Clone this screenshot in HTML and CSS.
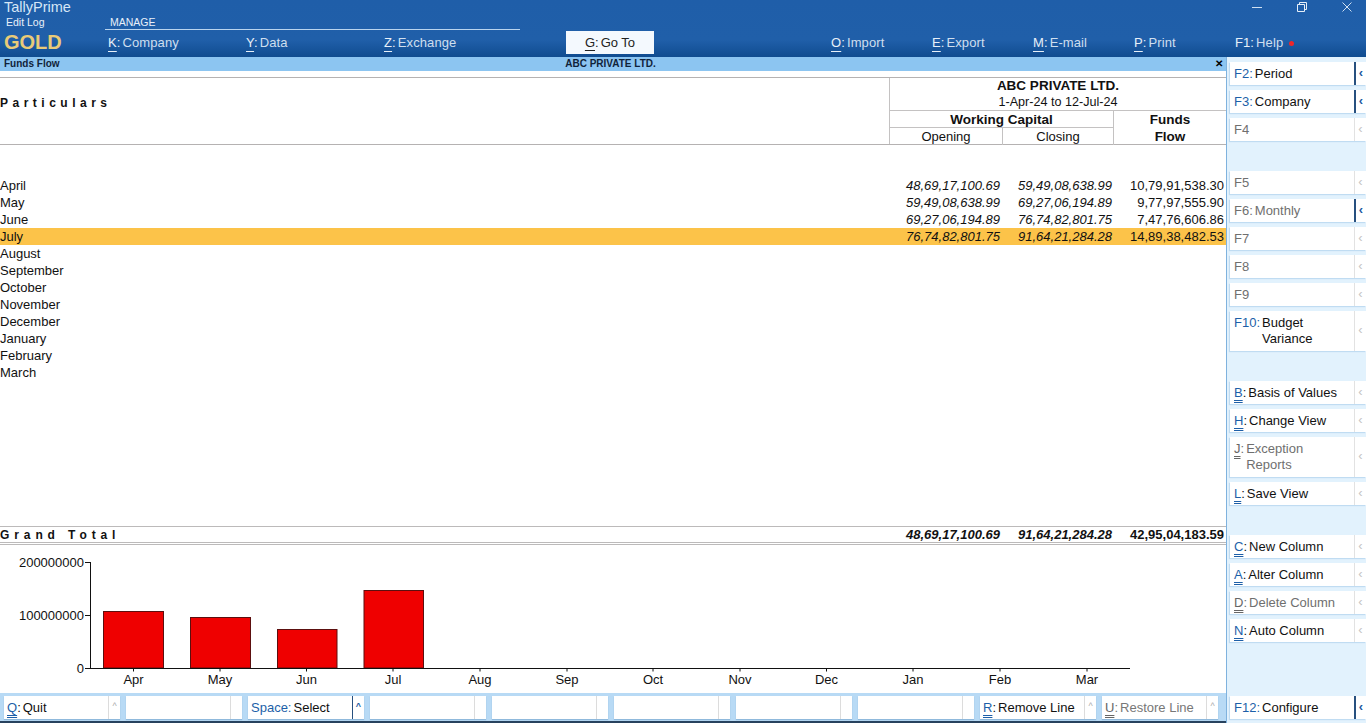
FILE: index.html
```html
<!DOCTYPE html>
<html lang="en">
<head>
    <meta charset="UTF-8">
    <title>TallyPrime - Funds Flow</title>
    <link rel="stylesheet" href="styles.css">
</head>
<body>
    <header class="topbar">
        <div class="brand">
            <div class="brand-name">TallyPrime</div>
            <div class="brand-log">Edit Log</div>
            <div class="brand-edition">GOLD</div>
        </div>
        <div class="top-main">
            <div class="top-upper">
                <div class="manage-label">MANAGE</div>
                <div class="win-controls">
                    <svg width="12" height="12" viewBox="0 0 12 12"><path d="M1 6.5h10" stroke="#cfe0f2" fill="none"/></svg>
                    <svg width="12" height="12" viewBox="0 0 12 12"><path d="M1.5 3.5h7v7h-7zM3.5 3.5v-2h7v7h-2" stroke="#e6eff8" fill="none"/></svg>
                    <svg width="12" height="12" viewBox="0 0 12 12"><path d="M1.5 1.5l9 9M10.5 1.5l-9 9" stroke="#cfe0f2" fill="none"/></svg>
                </div>
            </div>
            <nav class="top-menu">
                <div class="menu-manage">
                    <a class="menu-item"><u>K</u>:<span>Company</span></a>
                    <a class="menu-item"><u>Y</u>:<span>Data</span></a>
                    <a class="menu-item"><u>Z</u>:<span>Exchange</span></a>
                </div>
                <a class="goto-btn"><u>G</u>:<span>Go To</span></a>
                <div class="menu-right">
                    <a class="menu-item small"><u>O</u>:<span>Import</span></a>
                    <a class="menu-item small"><u>E</u>:<span>Export</span></a>
                    <a class="menu-item small"><u>M</u>:<span>E-mail</span></a>
                    <a class="menu-item small"><u>P</u>:<span>Print</span></a>
                    <a class="menu-item small">F1:<span>Help</span><i class="red-dot"></i></a>
                </div>
            </nav>
        </div>
    </header>

    <div class="main">
        <div class="content">
            <div class="titlebar">
                <div>Funds Flow</div>
                <div>ABC PRIVATE LTD.</div>
                <div class="title-close">&#10005;</div>
            </div>

            <div class="report">
                <div class="report-head">
                    <div class="head-particulars">Particulars</div>
                    <div class="head-columns">
                        <div class="head-company">
                            <b>ABC PRIVATE LTD.</b>
                            <div class="head-period">1-Apr-24 to 12-Jul-24</div>
                        </div>
                        <div class="head-split">
                            <div class="head-wc">
                                <b class="wc-title">Working Capital</b>
                                <div class="wc-cols">
                                    <div>Opening</div>
                                    <div>Closing</div>
                                </div>
                            </div>
                            <b class="head-flow">Funds<br>Flow</b>
                        </div>
                    </div>
                </div>

                <div class="rows">
                    <div class="row"><span>April</span><span class="num it">48,69,17,100.69</span><span class="num it">59,49,08,638.99</span><span class="num">10,79,91,538.30</span></div>
                    <div class="row"><span>May</span><span class="num it">59,49,08,638.99</span><span class="num it">69,27,06,194.89</span><span class="num">9,77,97,555.90</span></div>
                    <div class="row"><span>June</span><span class="num it">69,27,06,194.89</span><span class="num it">76,74,82,801.75</span><span class="num">7,47,76,606.86</span></div>
                    <div class="row selected"><span>July</span><span class="num it">76,74,82,801.75</span><span class="num it">91,64,21,284.28</span><span class="num">14,89,38,482.53</span></div>
                    <div class="row"><span>August</span></div>
                    <div class="row"><span>September</span></div>
                    <div class="row"><span>October</span></div>
                    <div class="row"><span>November</span></div>
                    <div class="row"><span>December</span></div>
                    <div class="row"><span>January</span></div>
                    <div class="row"><span>February</span></div>
                    <div class="row"><span>March</span></div>
                </div>

                <div class="row grand-total"><span class="gt-label">Grand Total</span><span class="num it">48,69,17,100.69</span><span class="num it">91,64,21,284.28</span><span class="num">42,95,04,183.59</span></div>

                <svg class="chart" width="1226" height="148" viewBox="0 545 1226 148">
                    <g class="bars">
                        <rect x="103.5" y="611.5" width="60" height="56.5"/>
                        <rect x="190.5" y="617.5" width="60" height="50.5"/>
                        <rect x="277.5" y="629.5" width="59.5" height="38.5"/>
                        <rect x="364" y="590.5" width="59.5" height="77.5"/>
                    </g>
                    <path class="axis" d="M90.5 562V668.5M85 562.5h6M85 615.5h6M85 668.5H1130M133.5 668.5v3M220 668.5v3M306.5 668.5v3M393 668.5v3M480 668.5v3M567 668.5v3M653 668.5v3M740 668.5v3M826.5 668.5v3M913 668.5v3M1000 668.5v3M1087 668.5v3"/>
                    <g class="y-labels">
                        <text x="84" y="567">200000000</text>
                        <text x="84" y="620">100000000</text>
                        <text x="84" y="673">0</text>
                    </g>
                    <g class="x-labels">
                        <text x="133.5" y="684">Apr</text>
                        <text x="220" y="684">May</text>
                        <text x="306.5" y="684">Jun</text>
                        <text x="393" y="684">Jul</text>
                        <text x="480" y="684">Aug</text>
                        <text x="567" y="684">Sep</text>
                        <text x="653" y="684">Oct</text>
                        <text x="740" y="684">Nov</text>
                        <text x="826.5" y="684">Dec</text>
                        <text x="913" y="684">Jan</text>
                        <text x="1000" y="684">Feb</text>
                        <text x="1087" y="684">Mar</text>
                    </g>
                </svg>
            </div>

            <div class="bottombar">
                <div class="bot-btn"><div class="bot-text"><u class="key">Q</u>:<span>Quit</span></div><i>^</i></div>
                <div class="bot-btn"><div class="bot-text"></div><i></i></div>
                <div class="bot-btn active"><div class="bot-text"><b class="fkey">Space:</b><span>Select</span></div><i>^</i></div>
                <div class="bot-btn"><div class="bot-text"></div><i></i></div>
                <div class="bot-btn"><div class="bot-text"></div><i></i></div>
                <div class="bot-btn"><div class="bot-text"></div><i></i></div>
                <div class="bot-btn"><div class="bot-text"></div><i></i></div>
                <div class="bot-btn"><div class="bot-text"></div><i></i></div>
                <div class="bot-btn"><div class="bot-text"><u class="key">R</u>:<span>Remove Line</span></div><i>^</i></div>
                <div class="bot-btn off"><div class="bot-text"><u class="key">U</u>:<span>Restore Line</span></div><i>^</i></div>
            </div>
        </div>

        <aside class="sidebar">
            <div class="side-btn active"><div class="side-text"><b class="fkey">F2:</b><span>Period</span></div><i>&#8249;</i></div>
            <div class="side-btn active"><div class="side-text"><b class="fkey">F3:</b><span>Company</span></div><i>&#8249;</i></div>
            <div class="side-btn off"><div class="side-text">F4</div><i>&#8249;</i></div>

            <div class="side-btn off group-start"><div class="side-text">F5</div><i>&#8249;</i></div>
            <div class="side-btn off active"><div class="side-text">F6:<span>Monthly</span></div><i>&#8249;</i></div>
            <div class="side-btn off"><div class="side-text">F7</div><i>&#8249;</i></div>
            <div class="side-btn off"><div class="side-text">F8</div><i>&#8249;</i></div>
            <div class="side-btn off"><div class="side-text">F9</div><i>&#8249;</i></div>
            <div class="side-btn tall"><div class="side-text"><b class="fkey">F10:</b><span>Budget<br>Variance</span></div><i>&#8249;</i></div>

            <div class="side-btn group-start"><div class="side-text"><u class="key">B</u>:<span>Basis of Values</span></div><i>&#8249;</i></div>
            <div class="side-btn"><div class="side-text"><u class="key">H</u>:<span>Change View</span></div><i>&#8249;</i></div>
            <div class="side-btn tall off"><div class="side-text"><u class="key">J</u>:<span>Exception<br>Reports</span></div><i>&#8249;</i></div>
            <div class="side-btn"><div class="side-text"><u class="key">L</u>:<span>Save View</span></div><i>&#8249;</i></div>

            <div class="side-btn group-start"><div class="side-text"><u class="key">C</u>:<span>New Column</span></div><i>&#8249;</i></div>
            <div class="side-btn"><div class="side-text"><u class="key">A</u>:<span>Alter Column</span></div><i>&#8249;</i></div>
            <div class="side-btn off"><div class="side-text"><u class="key">D</u>:<span>Delete Column</span></div><i>&#8249;</i></div>
            <div class="side-btn"><div class="side-text"><u class="key">N</u>:<span>Auto Column</span></div><i>&#8249;</i></div>

            <div class="side-btn active configure"><div class="side-text"><b class="fkey">F12:</b><span>Configure</span></div><i>&#8249;</i></div>
        </aside>
    </div>
</body>
</html>
```

FILE: styles.css
```css
* { margin: 0; padding: 0; box-sizing: border-box; }
html, body { height: 100%; overflow: hidden; }
body { font-family: 'Liberation Sans', Arial, sans-serif; font-size: 13px; color: #111; background: #fff; display: flex; flex-direction: column; width: 1366px; height: 723px; }
u { text-underline-offset: 3px; }
i { font-style: normal; }

/* top bar */
.topbar { height: 57px; flex: none; display: flex; color: #e8f0f9; background: linear-gradient(#1f5ea9 0%, #205fa9 70%, #104c90 100%); }
.brand { width: 105px; flex: none; padding-left: 4px; }
.brand-name { font-size: 14.5px; line-height: 14px; color: #d6e6f6; }
.brand-log { font-size: 10.5px; line-height: 16px; padding-left: 2px; }
.brand-edition { font-size: 20px; line-height: 24px; font-weight: bold; color: #e9cb78; }
.top-main { flex: 1; display: flex; flex-direction: column; }
.top-upper { height: 30px; display: flex; justify-content: space-between; }
.manage-label { width: 415px; height: 30px; padding: 16px 0 0 5px; font-size: 10.5px; line-height: 12px; border-bottom: 1px solid #b9d4ee; }
.win-controls { display: flex; gap: 33px; padding: 1px 13px 0 0; }
.top-menu { display: flex; height: 25px; padding-top: 1px; }
.menu-manage { width: 461px; display: flex; padding-left: 3px; }
.menu-item { display: block; width: 138px; line-height: 24px; letter-spacing: 0.1px; color: #e8f0f9; }
.menu-item u { text-underline-offset: 4px; }
.menu-item span { margin-left: 2px; color: #cfdfef; }
.menu-item.small { width: 101px; }
.goto-btn { width: 88px; height: 23px; background: #f4f9fe; color: #222; text-align: center; line-height: 24px; }
.goto-btn span { margin-left: 2px; }
.menu-right { display: flex; margin-left: 177px; }
.red-dot { display: inline-block; width: 5px; height: 5px; border-radius: 50%; background: #f0262a; margin: 0 0 1px 6px; }

/* main area */
.main { flex: 1; display: flex; min-height: 0; }
.content { width: 1227px; flex: none; display: flex; flex-direction: column; border-right: 1px solid #7fb2de; }
.titlebar { height: 14px; flex: none; display: grid; grid-template-columns: 1fr auto 1fr; padding: 0 9px 0 4px; font-size: 10px; line-height: 14px; font-weight: bold; color: #10233a; background: #8cc5f1; }
.title-close { text-align: right; font-size: 10px; color: #000; margin-right: -6px; }

/* report */
.report { flex: 1; display: flex; flex-direction: column; min-height: 0; padding-top: 6px; }
.report-head { height: 68px; flex: none; display: flex; border-top: 1px solid #b5b2b2; border-bottom: 1px solid #b5b2b2; }
.head-particulars { width: 889px; padding-top: 17px; font-size: 12px; line-height: 16px; font-weight: bold; letter-spacing: 4.5px; }
.head-columns { flex: 1; display: flex; flex-direction: column; border-left: 1px solid #c4c2c2; text-align: center; }
.head-columns b { font-size: 13.5px; }
.head-company { height: 32px; line-height: 16px; }
.head-period { font-size: 12.6px; }
.head-split { flex: 1; display: flex; border-top: 1px solid #c4c2c2; }
.head-wc { width: 224px; display: flex; flex-direction: column; border-right: 1px solid #c4c2c2; }
.wc-title { height: 17px; line-height: 17px; border-bottom: 1px solid #c4c2c2; }
.wc-cols { flex: 1; display: grid; grid-template-columns: 112px 1fr; line-height: 17px; }
.wc-cols div + div { border-left: 1px solid #c4c2c2; }
.head-flow { flex: 1; line-height: 17px; }

.rows { flex: 1; padding-top: 32px; }
.row { display: grid; grid-template-columns: 890px 113px 111px 112px; height: 17px; line-height: 17px; }
.num { text-align: right; padding-right: 3px; }
.num.it + .num { padding-right: 2px; }
.it { font-style: italic; }
.selected { background: #fcc349; }
.grand-total { height: 19px; flex: none; line-height: 16px; font-weight: bold; border-top: 1px solid #bcbaba; border-bottom: 3px double #bcbaba; }
.gt-label { font-size: 12px; letter-spacing: 4.9px; }

.chart { display: block; flex: none; }
.bars rect { fill: #ef0000; stroke: #5c0f0f; stroke-width: 1; }
.axis { fill: none; stroke: #111; stroke-width: 1; }
.chart text { font-family: 'Liberation Sans', Arial, sans-serif; font-size: 13px; fill: #111; }
.y-labels text { text-anchor: end; }
.x-labels text { text-anchor: middle; }

/* bottom bar */
.bottombar { height: 30px; flex: none; display: flex; gap: 6px; padding: 3px 4px; background: #b8daf5; border-bottom: 2px solid #27425e; }
.bot-btn { width: 116px; height: 23px; display: flex; background: #fff; box-shadow: 0 1px 1px #8fb9dc; line-height: 23px; }
.bot-text { flex: 1; padding-left: 3px; }
.bot-text span { margin-left: 2px; }
.bot-btn i { width: 12px; flex: none; border-left: 1px solid #dcdcdc; text-align: center; font-size: 9px; line-height: 21px; color: #aaa; }
.bot-btn.active i { border-left: 1px solid #27507f; color: #1d5aa0; font-weight: bold; }
.bot-btn.off .bot-text { color: #777; }

/* right button panel */
.sidebar { flex: 1; display: flex; flex-direction: column; gap: 5px; padding: 5px 0 4px 3px; background: #e2f2fd; }
.side-btn { height: 23px; flex: none; display: flex; background: #fff; box-shadow: -1px 1px 1px #c0dcf2; line-height: 23px; }
.side-btn.tall { height: 40px; }
.side-text { flex: 1; padding-left: 4px; white-space: nowrap; }
.side-text span { display: inline-block; margin-left: 2px; vertical-align: top; }
.tall .side-text { line-height: 16px; padding-top: 4px; }
.side-btn i { width: 12px; flex: none; border-left: 1px solid #e2e2e2; text-align: center; font-size: 13px; line-height: 21px; color: #c4c4c4; }
.side-btn.tall i { line-height: 38px; }
.side-btn.active i { border-left: 2px solid #27507f; color: #1d5aa0; font-weight: bold; }
.side-btn.off .side-text { color: #6f6f6f; }
.group-start { margin-top: 25px; }
.configure { margin-top: auto; }
.fkey { font-weight: normal; color: #1d5fa8; }
.key { color: #1d5fa8; text-decoration-style: double; }
.off .key { color: #666; }
```
